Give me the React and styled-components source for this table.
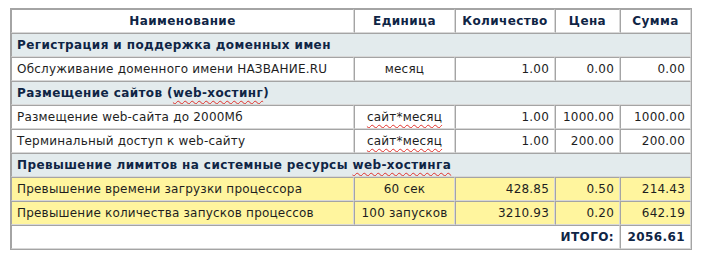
import React from "react";
import styled, { createGlobalStyle } from "styled-components";

const rows = [
  { type: "section", title: "Регистрация и поддержка доменных имен" },
  { type: "item", name: "Обслуживание доменного имени НАЗВАНИЕ.RU", unit: "месяц", qty: "1.00", price: "0.00", sum: "0.00" },
  { type: "section", title: ["Размещение сайтов (", { typo: "web-хостинг" }, ")"] },
  { type: "item", name: "Размещение web-сайта до 2000Мб", unit: { typo: "сайт*месяц" }, qty: "1.00", price: "1000.00", sum: "1000.00" },
  { type: "item", name: "Терминальный доступ к web-сайту", unit: { typo: "сайт*месяц" }, qty: "1.00", price: "200.00", sum: "200.00" },
  { type: "section", title: ["Превышение лимитов на системные ресурсы ", { typo: "web-хостинга" }] },
  { type: "item", over: true, name: "Превышение времени загрузки процессора", unit: "60 сек", qty: "428.85", price: "0.50", sum: "214.43" },
  { type: "item", over: true, name: "Превышение количества запусков процессов", unit: "100 запусков", qty: "3210.93", price: "0.20", sum: "642.19" },
];

function Text({ value }) {
  const parts = Array.isArray(value) ? value : [value];
  return parts.map((p, i) =>
    typeof p === "string" ? <React.Fragment key={i}>{p}</React.Fragment> : <Typo key={i}>{p.typo}</Typo>
  );
}

export default function App() {
  return (
    <Page>
      <GlobalStyle />
      <Table>
        <colgroup>
          <col style={{ width: 343 }} />
          <col style={{ width: 101 }} />
          <col style={{ width: 100 }} />
          <col style={{ width: 65 }} />
          <col style={{ width: 71 }} />
        </colgroup>
        <thead>
          <tr>
            <Th>Наименование</Th>
            <Th>Единица</Th>
            <Th>Количество</Th>
            <Th>Цена</Th>
            <Th>Сумма</Th>
          </tr>
        </thead>
        <tbody>
          {rows.map((r, i) =>
            r.type === "section" ? (
              <tr key={i}>
                <Section colSpan={5}>
                  <Text value={r.title} />
                </Section>
              </tr>
            ) : (
              <tr key={i}>
                <Td $over={r.over}>{r.name}</Td>
                <Td $over={r.over} $align="center">
                  <Text value={r.unit} />
                </Td>
                <Td $over={r.over} $align="right">{r.qty}</Td>
                <Td $over={r.over} $align="right">{r.price}</Td>
                <Td $over={r.over} $align="right">{r.sum}</Td>
              </tr>
            )
          )}
          <tr>
            <Total colSpan={4}>ИТОГО:</Total>
            <Total>2056.61</Total>
          </tr>
        </tbody>
      </Table>
    </Page>
  );
}

const GlobalStyle = createGlobalStyle`
  body {
    margin: 0;
    background: #fff;
    font-family: "DejaVu Sans", Verdana, sans-serif;
  }
`;

const Page = styled.div`
  padding: 8px 10px;
`;

const Table = styled.table`
  width: 682px;
  table-layout: fixed;
  border-collapse: separate;
  border-spacing: 0;
  border: 1px solid #a4a4a4;
  font-size: 12px;
`;

const Cell = styled.td`
  height: 16px;
  line-height: 16px;
  padding: 3px 5px;
  border: 1px solid;
  border-color: #a4a4a4 #d8d8d8 #d8d8d8 #a4a4a4;
  white-space: nowrap;
  overflow: hidden;
  letter-spacing: 0.2px;
`;

const Th = styled(Cell).attrs({ as: "th" })`
  height: 15px;
  font-weight: bold;
  color: #0f2545;
  text-align: center;
  background: #fff;
  letter-spacing: 0.4px;
`;

const Td = styled(Cell)`
  color: #1e1e1e;
  text-align: ${(p) => p.$align || "left"};
  background: ${(p) => (p.$over ? "#fff59e" : "#fff")};
`;

const Section = styled(Cell)`
  font-weight: bold;
  color: #0f2545;
  background: #e3ebed;
  text-align: left;
  letter-spacing: 0.4px;
`;

const Total = styled(Cell)`
  font-weight: bold;
  color: #0f2545;
  text-align: right;
  background: #fff;
  letter-spacing: 0.4px;
`;

const Typo = styled.span`
  text-decoration: underline wavy #e0302a;
  text-decoration-thickness: 1px;
  text-underline-offset: 3px;
`;
